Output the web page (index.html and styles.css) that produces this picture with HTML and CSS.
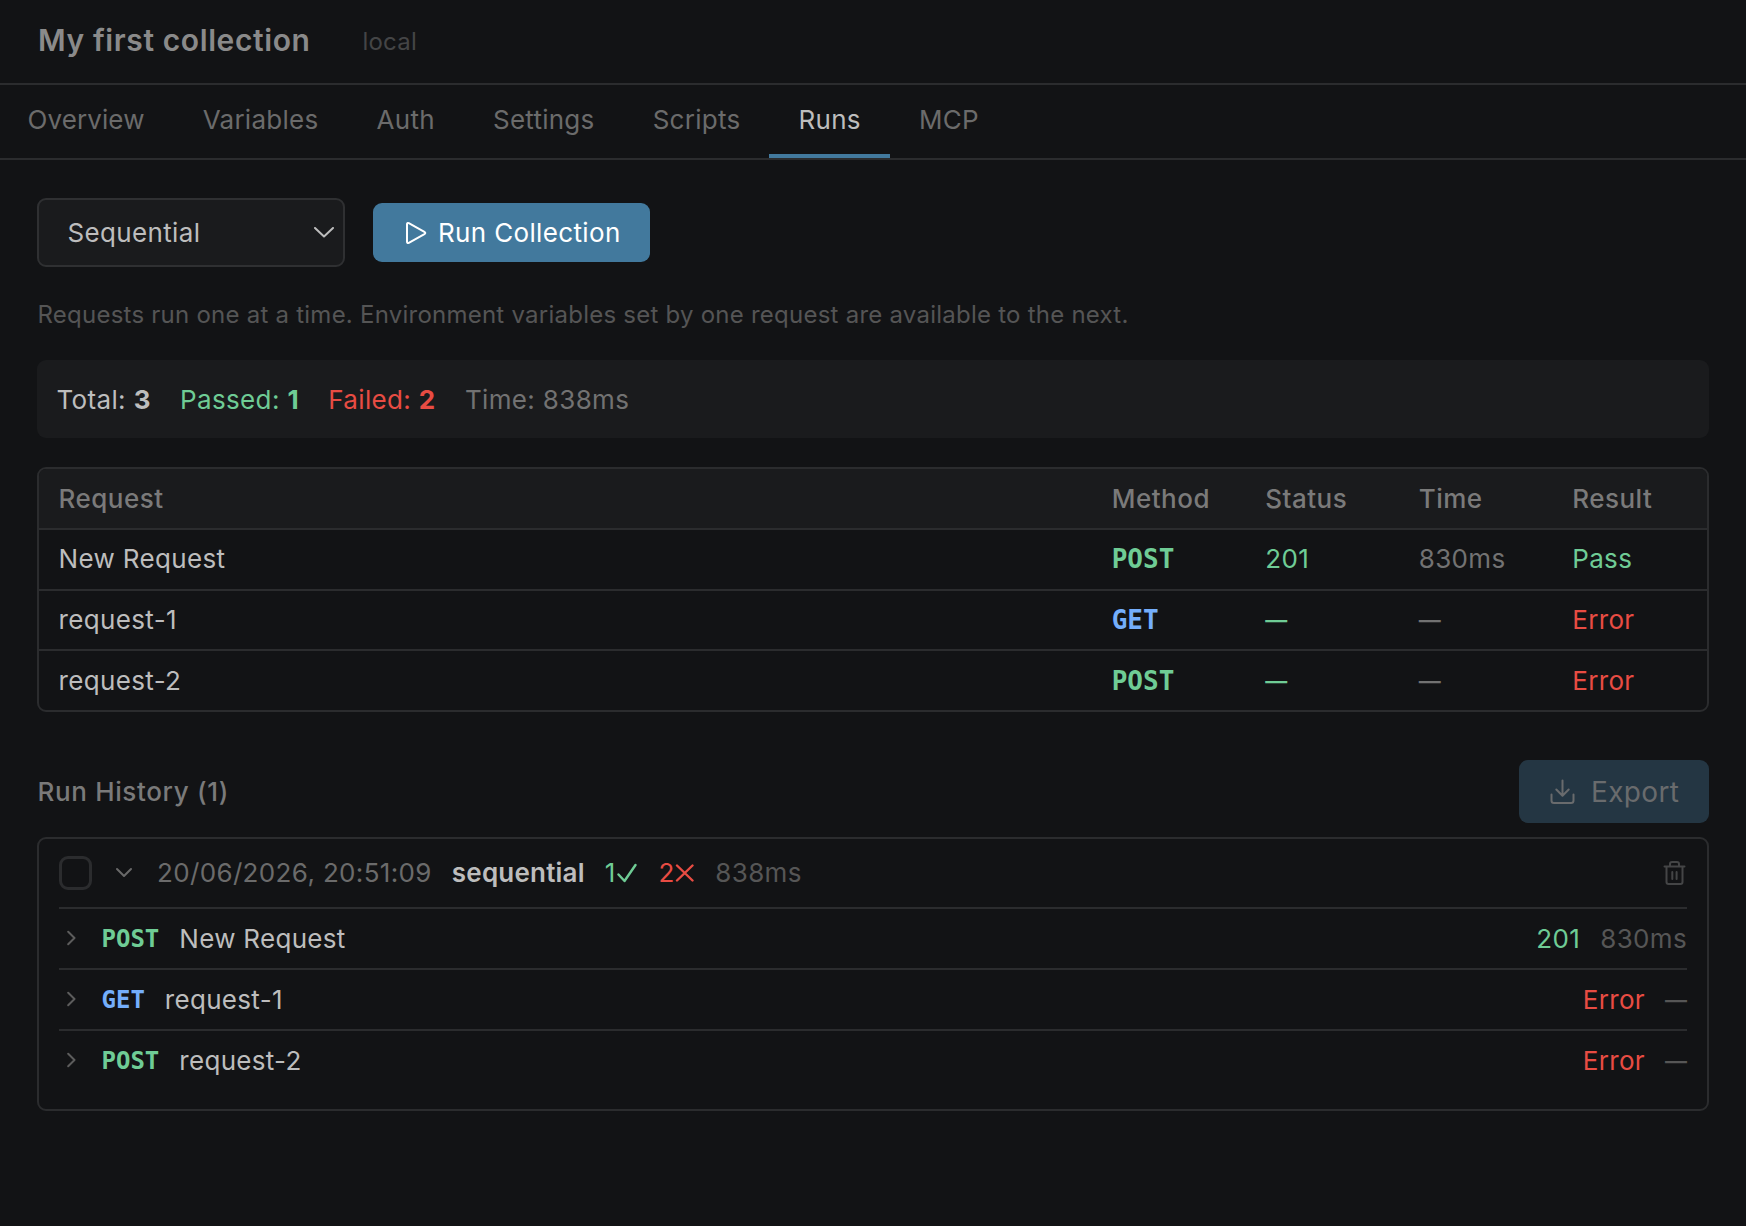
FILE: index.html
```html
<!DOCTYPE html>
<html lang="en">
<head>
    <meta charset="UTF-8">
    <meta name="viewport" content="width=device-width, initial-scale=1.0">
    <title>My first collection</title>
    <link rel="stylesheet" href="styles.css">
</head>
<body>

    <header class="header">
        <h1>My first collection</h1>
        <span class="badge">local</span>
    </header>

    <nav class="tabs">
        <a class="tab">Overview</a>
        <a class="tab">Variables</a>
        <a class="tab">Auth</a>
        <a class="tab">Settings</a>
        <a class="tab">Scripts</a>
        <a class="tab active">Runs</a>
        <a class="tab">MCP</a>
    </nav>

    <main class="content">
        <div class="toolbar">
            <div class="select">
                <span>Sequential</span>
                <svg width="20" height="11" viewBox="0 0 20 11"><path d="M1 1l9 8.5L19 1"/></svg>
            </div>
            <button class="run-button">
                <svg width="22" height="24" viewBox="0 0 22 24"><path d="M2 3.2v17.6q0 1.9 1.8 1l15.6-8.7q1.8-1.1 0-2.2L3.8 2.2Q2 1.3 2 3.2z"/></svg>
                <span>Run Collection</span>
            </button>
        </div>

        <p class="hint">Requests run one at a time. Environment variables set by one request are available to the next.</p>

        <div class="summary">
            <span>Total: <b>3</b></span>
            <span class="green">Passed: <b>1</b></span>
            <span class="red">Failed: <b>2</b></span>
            <span class="muted">Time: 838ms</span>
        </div>

        <div class="results">
            <div class="row head">
                <span>Request</span>
                <span>Method</span>
                <span>Status</span>
                <span>Time</span>
                <span>Result</span>
            </div>
            <div class="row">
                <span>New Request</span>
                <span class="method green">POST</span>
                <span class="green">201</span>
                <span class="muted">830ms</span>
                <span class="green">Pass</span>
            </div>
            <div class="row">
                <span>request-1</span>
                <span class="method blue">GET</span>
                <span class="green dash">—</span>
                <span class="muted dash">—</span>
                <span class="red">Error</span>
            </div>
            <div class="row">
                <span>request-2</span>
                <span class="method green">POST</span>
                <span class="green dash">—</span>
                <span class="muted dash">—</span>
                <span class="red">Error</span>
            </div>
        </div>

        <div class="history-header">
            <h2>Run History (1)</h2>
            <button class="export-button" disabled>
                <svg width="26" height="26" viewBox="0 0 26 26"><path d="M13.5 1.5v15M7.3 10.5l6.2 6.2 6.2-6.2M2.5 15.5v6q0 2.5 2.500 2.500h17q2.500 0 2.500-2.500v-6"/></svg>
                <span>Export</span>
            </button>
        </div>

        <section class="history">
            <div class="run">
                <span class="checkbox"></span>
                <svg class="toggle" width="18" height="11" viewBox="0 0 18 11"><path d="M2 2l7 7 7-7"/></svg>
                <span class="date">20/06/2026, 20:51:09</span>
                <span class="mode">sequential</span>
                <span class="count green">1<svg width="20" height="20" viewBox="0 0 20 20"><path d="M1.5 11.5l6 6.5L18.5 2"/></svg></span>
                <span class="count red">2<svg width="19" height="20" viewBox="0 0 19 20"><path d="M2 2.5l15.5 15M17.5 2.5L2 17.5"/></svg></span>
                <span class="dim">838ms</span>
                <svg class="trash" width="24" height="26" viewBox="0 0 24 26"><path d="M1.5 6.5h20M3.5 6.5v15.5q0 2 2 2h12q2 0 2-2V6.5M7 6V4q0-2 2-2h5q2 0 2 2v2M9.3 12v7M13.6 12v7"/></svg>
            </div>
            <div class="item">
                <svg width="10" height="16" viewBox="0 0 10 16"><path d="M1.2 1.8l6.3 6.2-6.3 6.2"/></svg>
                <span class="method green">POST</span>
                <span class="name">New Request</span>
                <span class="green">201</span>
                <span class="dim">830ms</span>
            </div>
            <div class="item">
                <svg width="10" height="16" viewBox="0 0 10 16"><path d="M1.2 1.8l6.3 6.2-6.3 6.2"/></svg>
                <span class="method blue">GET</span>
                <span class="name">request-1</span>
                <span class="red">Error</span>
                <span class="dim dash">—</span>
            </div>
            <div class="item">
                <svg width="10" height="16" viewBox="0 0 10 16"><path d="M1.2 1.8l6.3 6.2-6.3 6.2"/></svg>
                <span class="method green">POST</span>
                <span class="name">request-2</span>
                <span class="red">Error</span>
                <span class="dim dash">—</span>
            </div>
        </section>
    </main>

</body>
</html>
```

FILE: styles.css
```css
* {
    box-sizing: border-box;
}

body {
    margin: 0;
    min-height: 100vh;
    background: #121315;
    color: #bdbdbd;
    font-family: Inter, sans-serif;
    font-size: 26px;
    line-height: 32px;
    letter-spacing: 0.35px;
}

svg {
    display: block;
    flex-shrink: 0;
    fill: none;
    stroke: currentColor;
    stroke-width: 2;
    stroke-linecap: round;
    stroke-linejoin: round;
}

button {
    border: none;
    border-radius: 9px;
    font: inherit;
    letter-spacing: inherit;
    display: flex;
    align-items: center;
}

.header {
    height: 85px;
    padding: 0 38px 3px;
    display: flex;
    align-items: center;
    border-bottom: 2px solid #2b2c2e;
}

h1 {
    margin: 0 52px 0 0;
    font-size: 30px;
    font-weight: 600;
    letter-spacing: 0.6px;
    color: #8a8a8a;
}

.badge {
    padding-top: 3px;
    font-size: 24px;
    letter-spacing: 0.2px;
    color: #444546;
}

.tabs {
    display: flex;
    height: 75px;
    border-bottom: 2px solid #2b2c2e;
    letter-spacing: 0.25px;
}

.tab {
    padding: 19px 29.1px 0;
    color: #6b6b6b;
    border-bottom: 4px solid transparent;
}

.tab:first-child {
    padding-left: 27.5px;
    letter-spacing: 0.1px;
}

.tab.active {
    color: #bdbdbd;
    border-color: #42799d;
}

.content {
    padding: 38px 37px;
}

.toolbar {
    display: flex;
    align-items: center;
    gap: 28px;
}

.select {
    width: 308px;
    height: 69px;
    padding: 0 9px 0 28.5px;
    display: flex;
    align-items: center;
    justify-content: space-between;
    background: #1a1b1d;
    border: 2px solid #2f3032;
    border-radius: 9px;
}

.run-button {
    width: 277px;
    height: 59px;
    padding: 0 0 0 32px;
    gap: 11px;
    background: #42799d;
    color: #fff;
}

.hint {
    margin: 32px 0 29px;
    padding-left: 0.5px;
    font-size: 24px;
    letter-spacing: 0.24px;
    color: #555;
}

.summary {
    height: 78px;
    padding: 2px 20px 0 19.5px;
    display: flex;
    align-items: center;
    gap: 29.3px;
    background: #1a1b1d;
    border-radius: 9px;
}

.green { color: #6fcc95; }
.red { color: #e84c43; }
.blue { color: #74aefb; }
.muted { color: #727272; }
.dim { color: #565656; }

.results {
    margin-top: 29px;
    border: 2px solid #2b2c2e;
    border-radius: 9px;
    overflow: hidden;
}

.row {
    display: grid;
    grid-template-columns: 1fr repeat(3, 153.5px) 154.8px;
    height: 60.67px;
    align-items: center;
    border-top: 2px solid #2b2c2e;
}

.row span {
    padding-left: 20px;
}

.row span:first-child {
    padding-left: 19.5px;
}

.row.head {
    height: 59px;
    background: #1a1b1d;
    border-top: none;
    color: #7a7a7a;
    font-weight: 500;
    letter-spacing: 0.5px;
}

.method {
    font-family: "DejaVu Sans Mono", monospace;
    font-weight: 700;
    letter-spacing: 0;
}

.dash {
    font-size: 22px;
    font-weight: 600;
    letter-spacing: 0;
}

.history-header {
    margin: 48px 0 14px;
    display: flex;
    justify-content: space-between;
    align-items: center;
}

h2 {
    margin: 0;
    padding: 2px 0 0 0.5px;
    font-size: 26px;
    font-weight: 500;
    letter-spacing: 0.65px;
    color: #7a7a7a;
}

.export-button {
    width: 190px;
    height: 63px;
    padding: 1px 0 0 30px;
    gap: 16px;
    background: #243643;
    color: #696b6d;
    font-size: 28px;
}

.history {
    height: 274px;
    padding: 0 20px;
    border: 2px solid #2b2c2e;
    border-radius: 9px;
}

.run {
    height: 68px;
    display: flex;
    align-items: center;
    gap: 20px;
}

.checkbox {
    width: 33px;
    height: 34px;
    border: 3px solid #2b2c2e;
    border-radius: 9px;
}

.toggle {
    margin: 0 4px 0 3px;
    color: #696969;
}

.date {
    color: #6b6b6b;
}

.mode {
    font-weight: 600;
    letter-spacing: 0.2px;
}

.count {
    display: flex;
    align-items: center;
}

.count svg {
    margin-left: 1.5px;
    stroke-width: 2.4;
}

.count.red {
    margin: 0 1.5px;
}

.count.red svg {
    margin-left: 0;
}

.trash {
    margin-left: auto;
    color: #444546;
}

.item {
    height: 61px;
    padding-left: 8px;
    display: flex;
    align-items: center;
    gap: 20px;
    border-top: 2px solid #2b2c2e;
}

.item svg {
    margin-right: 4.5px;
    color: #5c5c5c;
}

.item span {
    padding-top: 1px;
}

.item .method {
    font-size: 24px;
}

.item .name {
    margin-right: auto;
    letter-spacing: 0.3px;
}
```
